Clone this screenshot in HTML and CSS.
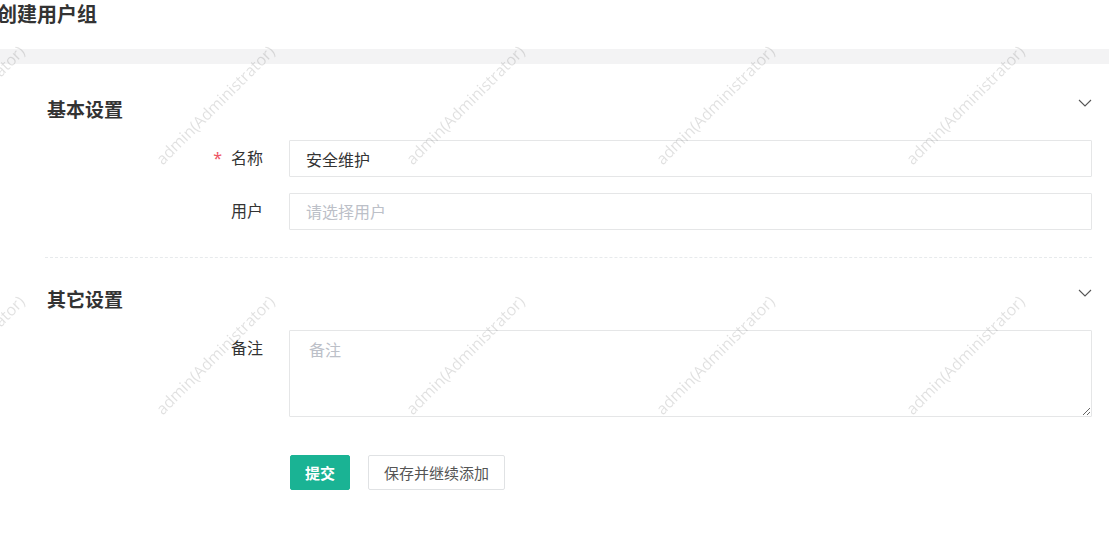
FILE: index.html
```html
<!DOCTYPE html>
<html lang="zh-CN">
<head>
  <meta charset="UTF-8">
  <meta name="viewport" content="width=device-width, initial-scale=1.0">
  <title>创建用户组</title>
  <link rel="stylesheet" href="styles.css">
</head>
<body>

<div class="page-head">
  <h2 class="page-title">创建用户组</h2>
</div>
<div class="page-gap"></div>

<form class="form-box">
  <div class="fieldset">
    <div class="fieldset-head">
      <span class="fieldset-title">基本设置</span>
      <svg class="chevron" width="14" height="8" viewBox="0 0 14 8"><path d="M1 1l6 6 6-6" fill="none" stroke="#555" stroke-width="1.1"/></svg>
    </div>
    <div class="form-row">
      <label class="form-label"><span class="required">*</span>名称</label>
      <input class="form-control" type="text" value="安全维护">
    </div>
    <div class="form-row">
      <label class="form-label">用户</label>
      <input class="form-control" type="text" placeholder="请选择用户">
    </div>
  </div>

  <div class="fieldset fieldset-line">
    <div class="fieldset-head">
      <span class="fieldset-title">其它设置</span>
      <svg class="chevron" width="14" height="8" viewBox="0 0 14 8"><path d="M1 1l6 6 6-6" fill="none" stroke="#555" stroke-width="1.1"/></svg>
    </div>
    <div class="form-row">
      <label class="form-label">备注</label>
      <textarea class="form-control form-textarea" placeholder="备注"></textarea>
    </div>
  </div>

  <div class="form-actions">
    <button type="button" class="btn btn-primary">提交</button>
    <button type="button" class="btn btn-white">保存并继续添加</button>
  </div>
</form>

<div class="watermark">
  <span>admin(Administrator)</span><span>admin(Administrator)</span><span>admin(Administrator)</span><span>admin(Administrator)</span><span>admin(Administrator)</span><span>admin(Administrator)</span>
  <span>admin(Administrator)</span><span>admin(Administrator)</span><span>admin(Administrator)</span><span>admin(Administrator)</span><span>admin(Administrator)</span><span>admin(Administrator)</span>
  <span>admin(Administrator)</span><span>admin(Administrator)</span><span>admin(Administrator)</span><span>admin(Administrator)</span><span>admin(Administrator)</span><span>admin(Administrator)</span>
</div>

</body>
</html>
```

FILE: styles.css
```css
body {
  margin: 0;
  padding: 0;
  font-family: "Noto Sans", "Noto Sans CJK SC", sans-serif;
  font-size: 14px;
  color: #333;
  background-color: #fff;
  overflow: hidden;
}
.page-head {
  height: 49px;
}
.page-title {
  margin: 0 0 0 -3px;
  padding-top: 1px;
  font-size: 20px;
  font-weight: 600;
  line-height: 28px;
  color: #333;
}
.page-gap {
  height: 15px;
  background-color: #f3f3f4;
}
.form-box {
  padding: 27px 17px 0 45px;
}
.fieldset {
  padding-bottom: 11px;
}
.fieldset-line {
  border-top: 1px dashed #e7eaec;
  padding-top: 23px;
}
.fieldset-head {
  display: flex;
  justify-content: space-between;
  align-items: center;
  height: 36px;
  margin-bottom: 13px;
  padding-left: 2px;
}
.fieldset-title {
  font-size: 19px;
  font-weight: 700;
  color: #333;
}
.chevron {
  margin-right: 0;
  margin-top: -12px;
}
.form-row {
  display: flex;
  align-items: flex-start;
  margin-bottom: 16px;
}
.form-label {
  width: 244px;
  padding-right: 26px;
  box-sizing: border-box;
  text-align: right;
  line-height: 37px;
  font-size: 16px;
  color: #333;
  flex-shrink: 0;
}
.required {
  color: #ed5565;
  margin-right: 9px;
}
.form-control {
  flex: 1;
  height: 37px;
  box-sizing: border-box;
  border: 1px solid #e5e6e7;
  border-radius: 1px;
  padding: 0 16px;
  font-family: "Noto Sans", "Noto Sans CJK SC", sans-serif;
  font-size: 16px;
  color: #333;
  background: transparent;
  outline: none;
}
.form-control::placeholder {
  color: #bcc0c8;
}
.form-textarea {
  height: 87px;
  padding: 7px 19px;
  resize: vertical;
  line-height: 24px;
}
.form-actions {
  padding: 11px 0 0 245px;
  display: flex;
  gap: 18px;
}
.btn {
  height: 35px;
  padding: 0 10px;
  border-radius: 2px;
  font-family: "Noto Sans", "Noto Sans CJK SC", sans-serif;
  font-size: 15px;
  cursor: pointer;
}
.btn-primary {
  width: 60px;
  background-color: #1ab394;
  border: 1px solid #1ab394;
  color: #fff;
  font-weight: 700;
}
.btn-white {
  width: 137px;
  background-color: #fff;
  border: 1px solid #e0e2e4;
  color: #555;
}
.watermark {
  position: fixed;
  left: -160px;
  top: -20px;
  display: grid;
  grid-template-columns: repeat(6, 250px);
  grid-auto-rows: 250px;
  pointer-events: none;
}
.watermark span {
  display: flex;
  align-items: center;
  justify-content: center;
  transform: rotate(-45deg);
  font-family: "Open Sans", sans-serif;
  font-size: 16px;
  color: rgba(0, 0, 0, 0.12);
  white-space: nowrap;
}
```
